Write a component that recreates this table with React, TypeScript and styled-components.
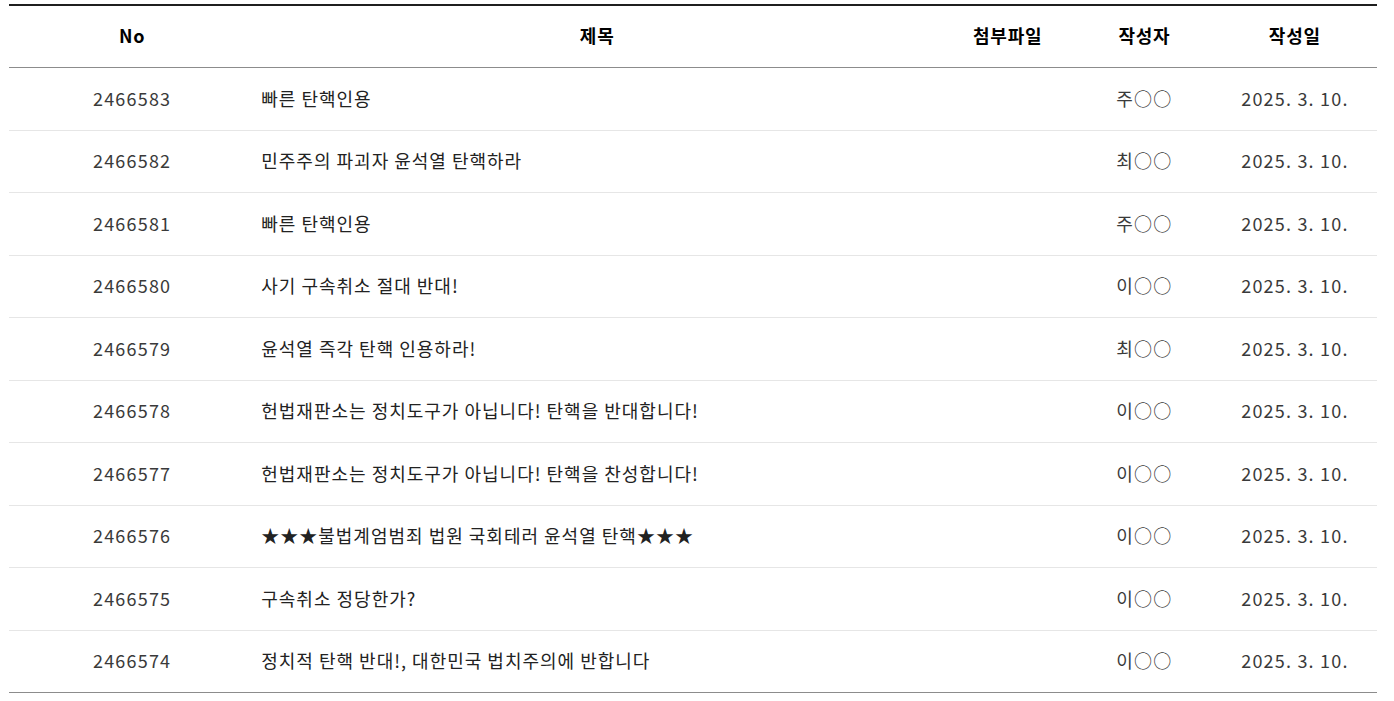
import React, { FC } from 'react';
import styled, { createGlobalStyle } from 'styled-components';

type Post = {
  no: number;
  title: string;
  writer: string;
  date: string;
};

const posts: Post[] = [
  { no: 2466583, title: '빠른 탄핵인용', writer: '주○○', date: '2025. 3. 10.' },
  { no: 2466582, title: '민주주의 파괴자 윤석열 탄핵하라', writer: '최○○', date: '2025. 3. 10.' },
  { no: 2466581, title: '빠른 탄핵인용', writer: '주○○', date: '2025. 3. 10.' },
  { no: 2466580, title: '사기 구속취소 절대 반대!', writer: '이○○', date: '2025. 3. 10.' },
  { no: 2466579, title: '윤석열 즉각 탄핵 인용하라!', writer: '최○○', date: '2025. 3. 10.' },
  { no: 2466578, title: '헌법재판소는 정치도구가 아닙니다! 탄핵을 반대합니다!', writer: '이○○', date: '2025. 3. 10.' },
  { no: 2466577, title: '헌법재판소는 정치도구가 아닙니다! 탄핵을 찬성합니다!', writer: '이○○', date: '2025. 3. 10.' },
  { no: 2466576, title: '★★★불법계엄범죄 법원 국회테러 윤석열 탄핵★★★', writer: '이○○', date: '2025. 3. 10.' },
  { no: 2466575, title: '구속취소 정당한가?', writer: '이○○', date: '2025. 3. 10.' },
  { no: 2466574, title: '정치적 탄핵 반대!, 대한민국 법치주의에 반합니다', writer: '이○○', date: '2025. 3. 10.' },
];

const GlobalStyle = createGlobalStyle`
  body {
    margin: 0;
    background: #fff;
    font-family: "Noto Sans CJK KR", "Noto Sans", sans-serif;
  }
`;

const App: FC = () => {
  return (
    <>
      <GlobalStyle />
      <Board>
        <HeadRow>
          <HeadCell>No</HeadCell>
          <HeadCell>제목</HeadCell>
          <HeadCell>첨부파일</HeadCell>
          <HeadCell>작성자</HeadCell>
          <HeadCell>작성일</HeadCell>
        </HeadRow>
        {posts.map((post, i) => (
          <Row key={post.no} last={i === posts.length - 1}>
            <Cell>{post.no}</Cell>
            <TitleCell>{post.title}</TitleCell>
            <Cell />
            <Cell>{post.writer}</Cell>
            <Cell>{post.date}</Cell>
          </Row>
        ))}
      </Board>
    </>
  );
};

export default App;

const Board = styled.div`
  width: 1368px;
  margin: 4px 0 0 9px;
  border-top: 2px solid #1f1f1f;
`;

const columns = '18% 50% 10% 10% 12%';

const HeadRow = styled.div`
  display: grid;
  grid-template-columns: ${columns};
  height: 62px;
  box-sizing: border-box;
  border-bottom: 1px solid #8c8c8c;
`;

const HeadCell = styled.div`
  display: flex;
  align-items: center;
  justify-content: center;
  padding-bottom: 3px;
  font-size: 18px;
  font-weight: 700;
  letter-spacing: 0.8px;
  color: #000;
`;

const Row = styled.div<{ last?: boolean }>`
  display: grid;
  grid-template-columns: ${columns};
  height: 62.5px;
  box-sizing: border-box;
  border-bottom: 1px solid ${(p) => (p.last ? '#8c8c8c' : '#e6e6e6')};
`;

const Cell = styled.div`
  display: flex;
  align-items: center;
  justify-content: center;
  padding-bottom: 2px;
  font-size: 18px;
  color: #3a3a3a;
  letter-spacing: 1.2px;
`;

const TitleCell = styled.div`
  display: flex;
  align-items: center;
  padding: 0 0 2px 6px;
  font-size: 18px;
  color: #222;
  letter-spacing: 1px;
  white-space: nowrap;
`;
